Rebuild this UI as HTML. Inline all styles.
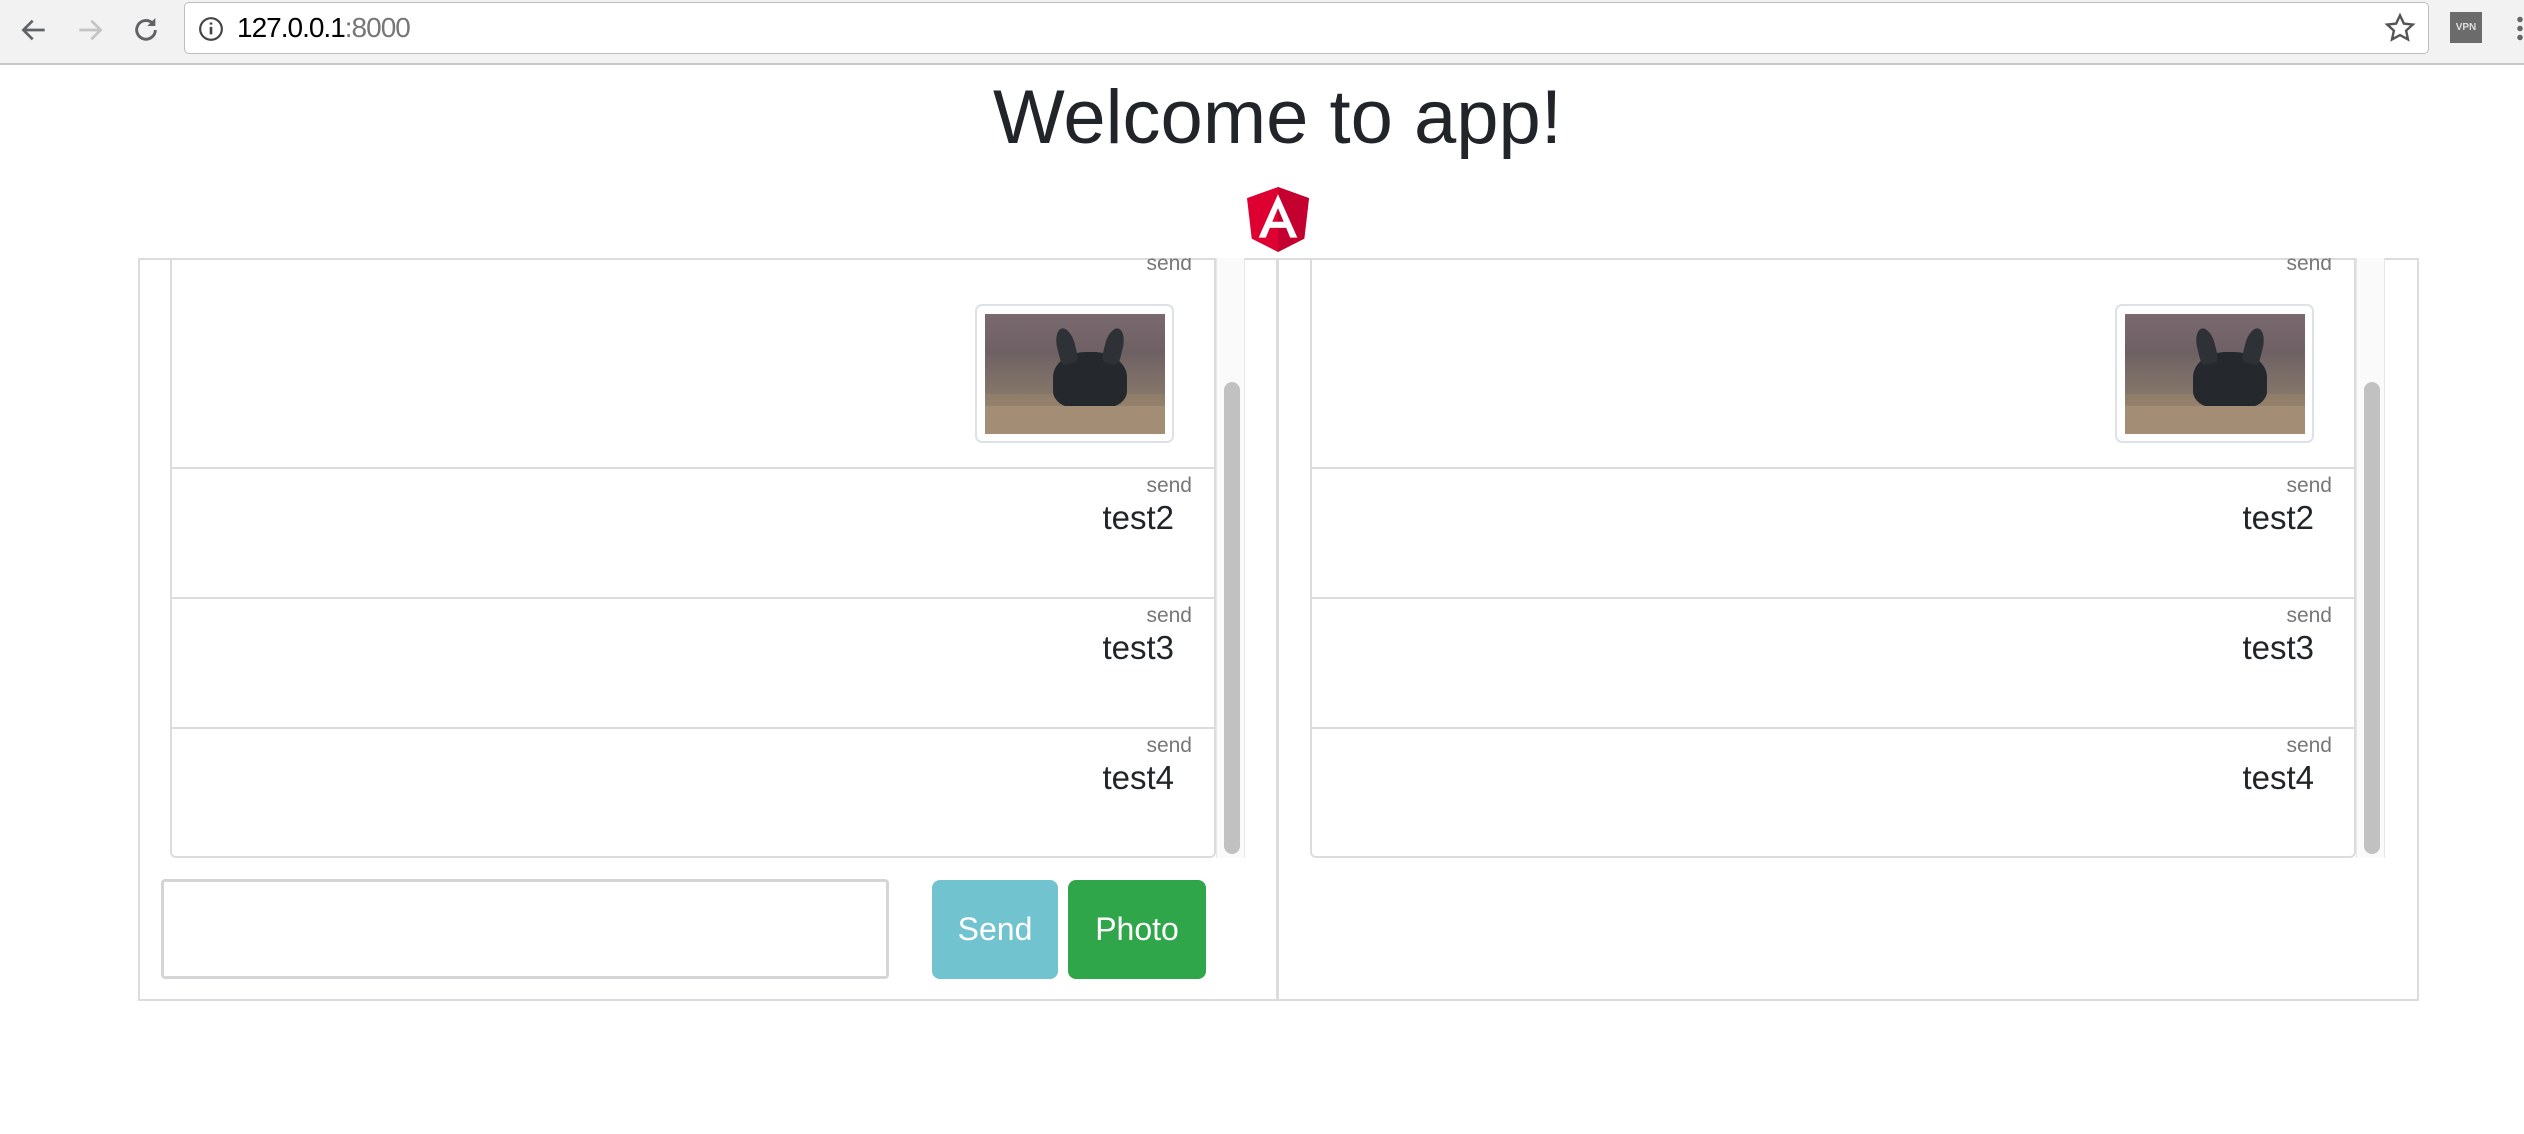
<!DOCTYPE html>
<html><head><meta charset="utf-8"><style>
*{box-sizing:border-box;margin:0;padding:0}
body{width:2524px;height:1134px;background:#fff;position:relative;overflow:hidden;font-family:"Liberation Sans",sans-serif;color:#212529}
.a{position:absolute}
.tb{left:0;top:0;width:2524px;height:65px;background:#f2f2f2;border-bottom:2px solid #c8c8c8}
.addr{left:184px;top:2px;width:2245px;height:52px;background:#fff;border:1px solid #bdbdbd;border-radius:5px}
.url{left:237px;top:12px;font-size:28px;letter-spacing:-1px;color:#000}
.url span{color:#777}
.panel{left:138px;top:258px;width:2281px;height:743px;border:2px solid #dcdcdc}
.div{left:1276px;top:258px;width:3px;height:743px;background:#dcdcdc}
.list{width:1046px;height:600px;top:258px;border:2px solid #dcdcdc;border-top:none;border-radius:0 0 6px 6px;overflow:hidden}
.row{position:absolute;left:0;width:1042px;height:130px;border-top:2px solid #dcdcdc}
.s{position:absolute;right:22px;font-size:21px;color:#777}
.t{position:absolute;right:40px;font-size:33px;color:#212529}
.track{width:29px;height:600px;top:258px;background:#fafafa;border-left:1px solid #e8e8e8;border-right:1px solid #e8e8e8}
.thumb{width:16px;height:472px;top:382px;background:#c1c1c1;border-radius:8px}
.ibox{width:199px;height:139px;border:2px solid #dee2e6;border-radius:7px;background:#fff}
.img{width:180px;height:120px;left:8px;top:8px;overflow:hidden;background:linear-gradient(180deg,#7a6a70 0%,#6d5f62 35%,#8b7a68 60%,#a08c72 100%)}
.btn{top:880px;height:99px;border-radius:8px;color:#fff;font-size:32px;text-align:center;line-height:99px}
</style></head><body>
<div class="a tb"></div>
<svg class="a" style="left:18px;top:14px" width="32" height="32" viewBox="0 0 24 24"><path d="M20 12H5M11 5l-7 7 7 7" stroke="#5f6368" stroke-width="2" fill="none"/></svg>
<svg class="a" style="left:74px;top:14px" width="32" height="32" viewBox="0 0 24 24"><path d="M4 12h15M13 5l7 7-7 7" stroke="#c4c4c4" stroke-width="2" fill="none"/></svg>
<svg class="a" style="left:130px;top:14px" width="32" height="32" viewBox="0 0 24 24"><path d="M19 12a7 7 0 1 1-2-5" stroke="#5f6368" stroke-width="2.2" fill="none"/><path d="M19 3v6h-6z" fill="#5f6368"/></svg>
<div class="a addr"></div>
<svg class="a" style="left:198px;top:16px" width="26" height="26" viewBox="0 0 24 24"><circle cx="12" cy="12" r="10" stroke="#444" stroke-width="2" fill="none"/><path d="M12 10v7M12 6v2" stroke="#444" stroke-width="2.4"/></svg>
<div class="a url">127.0.0.1<span>:8000</span></div>
<svg class="a" style="left:2384px;top:12px" width="32" height="32" viewBox="0 0 24 24"><path d="M12 2.5l2.9 6.2 6.7.7-5 4.6 1.4 6.6L12 17.3 6 20.6l1.4-6.6-5-4.6 6.7-.7z" stroke="#555" stroke-width="1.8" fill="none"/></svg>
<div class="a" style="left:2450px;top:12px;width:32px;height:31px;background:#6b6b6b;color:#ddd;font-size:10px;font-weight:bold;text-align:center;line-height:31px">VPN</div>
<div class="a" style="left:2517px;top:15px;width:6px;height:26px;background:radial-gradient(circle,#666 2.5px,transparent 3px) 0 0/6px 9px"></div>
<div class="a" style="left:0;top:68px;width:2555px;text-align:center;font-size:76px;line-height:100px;color:#212529">Welcome to app!</div>
<svg class="a" style="left:1247px;top:187px" width="62" height="65" viewBox="0 0 250 262"><path d="M125 0L0 45l19 163 106 54 106-54 19-163z" fill="#dd0031"/><path d="M125 0v262l106-54 19-163z" fill="#c3002f"/><path d="M125 29L47 204h29l16-39h66l16 39h29zm23 111h-46l23-55z" fill="#fff"/></svg>
<div class="a panel"></div>
<div class="a div"></div>

<div class="a list" style="left:170px">
<div class="s" style="top:-6px">send</div>
<div class="a ibox" style="left:803px;top:46px"><div class="a img"><div class="a" style="left:0;top:40px;width:180px;height:40px;background:linear-gradient(180deg,#6f6264,#85766a)"></div><div class="a" style="left:68px;top:38px;width:74px;height:56px;background:#25292e;border-radius:45% 45% 30% 30%"></div><div class="a" style="left:72px;top:14px;width:18px;height:36px;background:#2e3236;border-radius:50% 50% 20% 20%;transform:rotate(-14deg)"></div><div class="a" style="left:120px;top:14px;width:18px;height:36px;background:#2e3236;border-radius:50% 50% 20% 20%;transform:rotate(14deg)"></div><div class="a" style="left:0;top:92px;width:180px;height:28px;background:#a38e75"></div></div></div>
<div class="row" style="top:209px"><div class="s" style="top:5px">send</div><div class="t" style="top:30px">test2</div></div>
<div class="row" style="top:339px"><div class="s" style="top:5px">send</div><div class="t" style="top:30px">test3</div></div>
<div class="row" style="top:469px"><div class="s" style="top:5px">send</div><div class="t" style="top:30px">test4</div></div>
</div>
<div class="a track" style="left:1216px"></div>
<div class="a thumb" style="left:1224px"></div>

<div class="a list" style="left:1310px">
<div class="s" style="top:-6px">send</div>
<div class="a ibox" style="left:803px;top:46px"><div class="a img"><div class="a" style="left:0;top:40px;width:180px;height:40px;background:linear-gradient(180deg,#6f6264,#85766a)"></div><div class="a" style="left:68px;top:38px;width:74px;height:56px;background:#25292e;border-radius:45% 45% 30% 30%"></div><div class="a" style="left:72px;top:14px;width:18px;height:36px;background:#2e3236;border-radius:50% 50% 20% 20%;transform:rotate(-14deg)"></div><div class="a" style="left:120px;top:14px;width:18px;height:36px;background:#2e3236;border-radius:50% 50% 20% 20%;transform:rotate(14deg)"></div><div class="a" style="left:0;top:92px;width:180px;height:28px;background:#a38e75"></div></div></div>
<div class="row" style="top:209px"><div class="s" style="top:5px">send</div><div class="t" style="top:30px">test2</div></div>
<div class="row" style="top:339px"><div class="s" style="top:5px">send</div><div class="t" style="top:30px">test3</div></div>
<div class="row" style="top:469px"><div class="s" style="top:5px">send</div><div class="t" style="top:30px">test4</div></div>
</div>
<div class="a track" style="left:2356px"></div>
<div class="a thumb" style="left:2364px"></div>

<div class="a" style="left:161px;top:879px;width:728px;height:100px;border:3px solid #d5d5d8;border-radius:4px;background:#fff"></div>
<div class="a btn" style="left:932px;width:126px;background:#72c3d0">Send</div>
<div class="a btn" style="left:1068px;width:138px;background:#30a64a">Photo</div>
</body></html>
